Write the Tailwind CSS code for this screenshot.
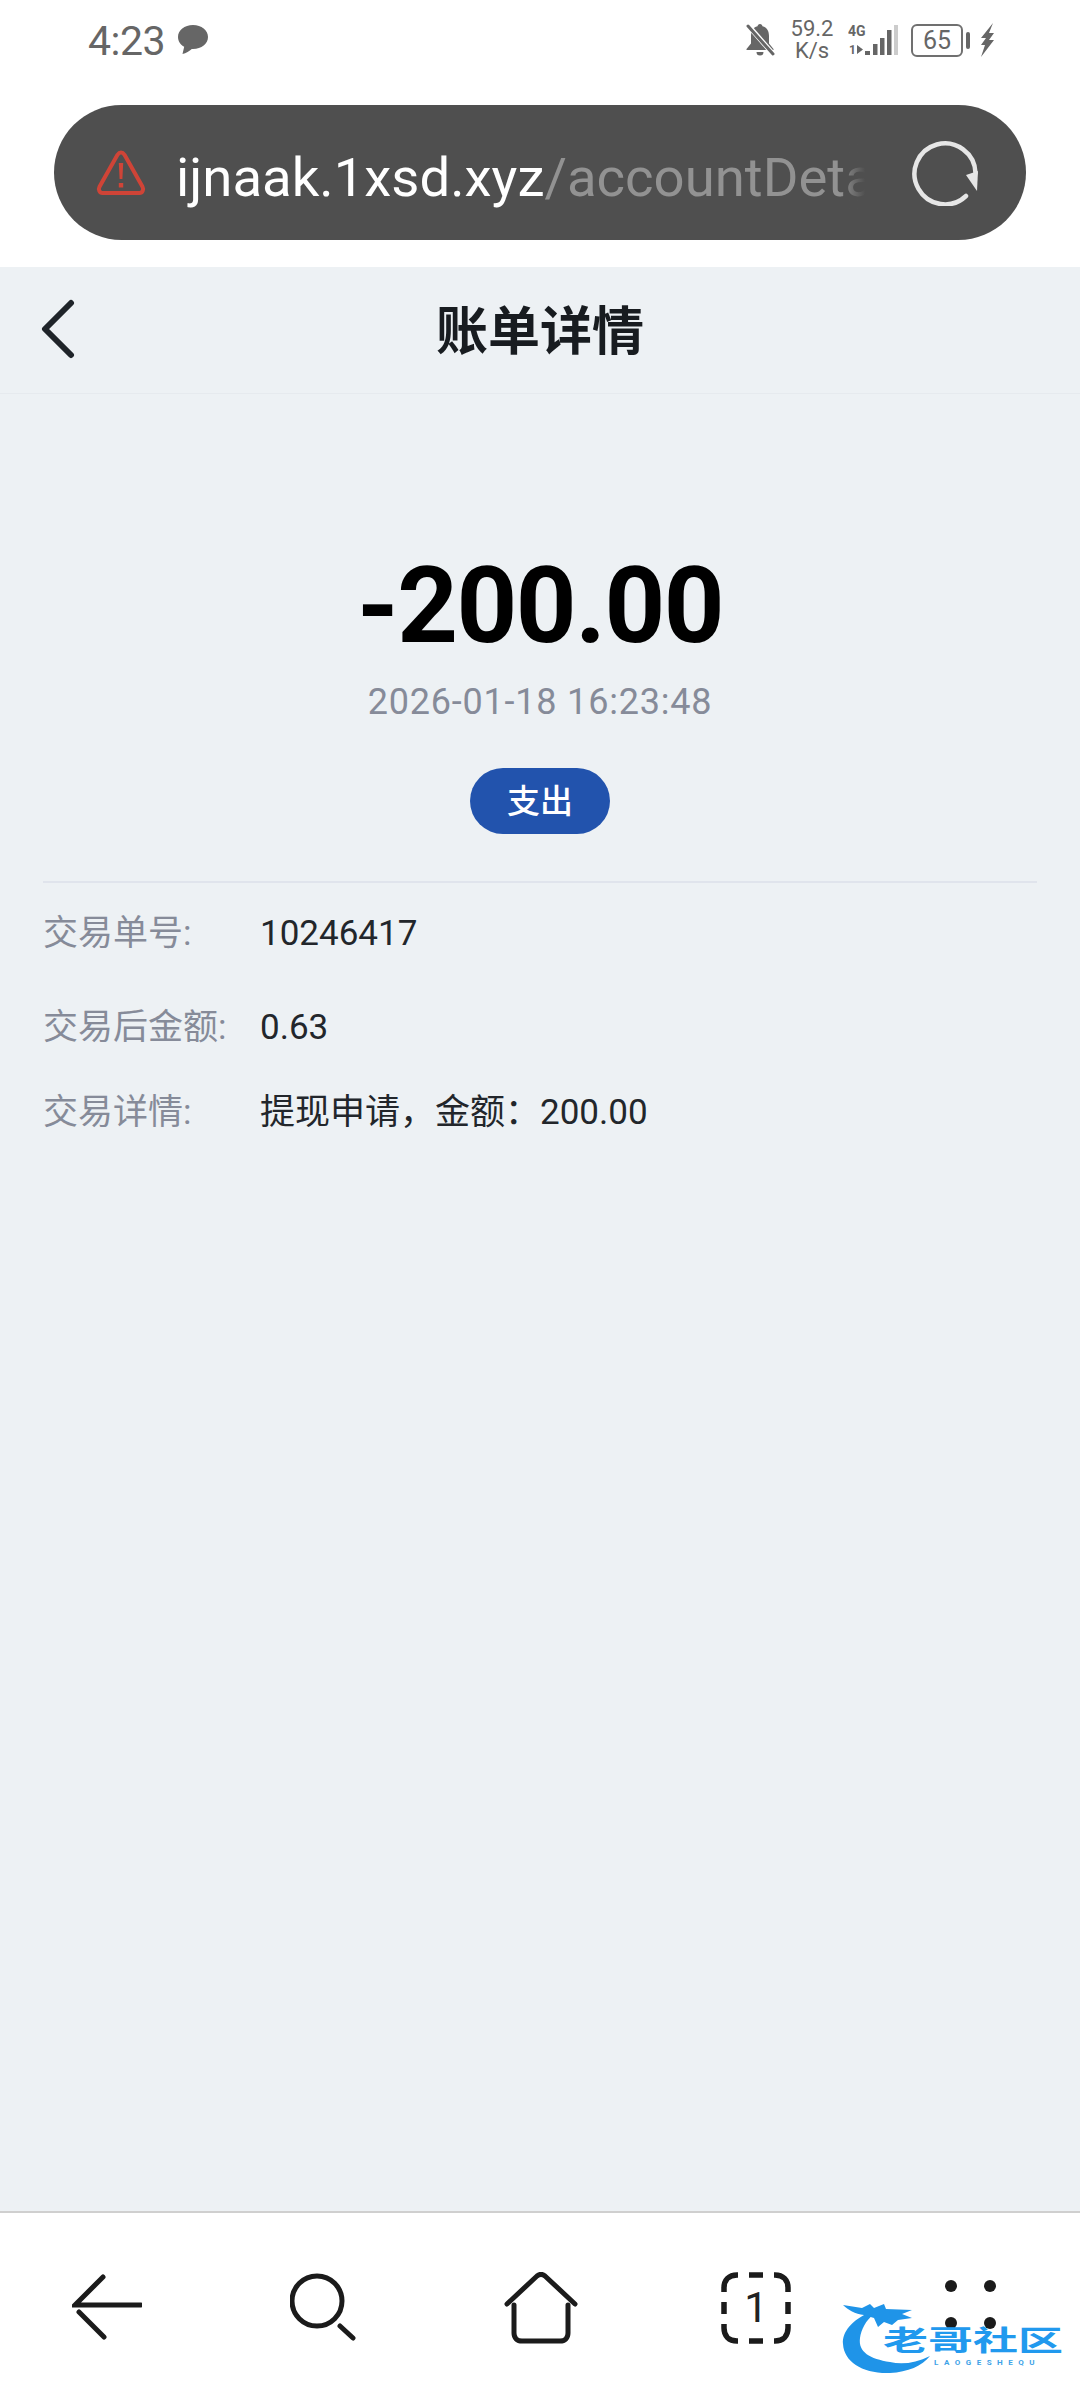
<!DOCTYPE html>
<html lang="zh-CN">
<head>
<meta charset="UTF-8">
<meta name="viewport" content="width=device-width, initial-scale=1.0">
<title>账单详情</title>
<script src="https://cdn.jsdelivr.net/npm/@tailwindcss/browser@4"></script>
</head>
<body class="font-['Roboto','Noto_Sans_CJK_SC',sans-serif] bg-white">
<div class="relative w-[1080px] h-[2400px] flex flex-col overflow-hidden">

  <!-- browser chrome -->
  <header class="h-[267px] shrink-0 bg-white flex flex-col">
    <div class="h-[105px] flex items-start justify-between pl-[88px] pr-[85px] pt-[18px] text-[#666]">
      <div class="flex items-center gap-[12px] h-[40px] mt-[3px]">
        <span class="text-[41px] leading-none tracking-[-0.5px]">4:23</span>
        <svg class="w-[32px] h-[32px] -mt-[3px]" viewBox="0 0 32 32"><path fill="#666" d="M16 1C7.500 1 1 6.300 1 13c0 4.200 2.500 7.700 6.200 9.800L5.500 30c3.500-.8 7-3 9.300-5.100.4 0 .8.100 1.200.100 8.500 0 15-5.300 15-12S24.500 1 16 1z"/></svg>
      </div>
      <div class="flex items-center h-[44px]">
        <svg class="w-[30px] h-[34px]" viewBox="0 0 30 34"><path fill="#666" d="M15 1c-1.500 0-2.300 1-2.500 2.300C8 4.500 6 8 6 13v7.500L1.500 26v1h27v-1L24 20.500V13c0-5-2-8.500-6.500-9.700C17.300 2 16.500 1 15 1z"/><path fill="#666" d="M11.500 29h7a3.500 3.500 0 0 1-7 0z"/><path stroke="#fff" stroke-width="5" d="M2 1l26 30"/><path stroke="#666" stroke-width="3" stroke-linecap="round" d="M3 3l25 28"/></svg>
        <div class="ml-[15px] w-[44px] flex flex-col items-center text-[22px] leading-[22px]">
          <span>59.2</span><span>K/s</span>
        </div>
        <svg class="ml-[14px] w-[50px] h-[34px]" viewBox="0 0 50 34">
          <text x="0" y="13" font-family="Roboto" font-weight="700" font-size="14" fill="#666">4G</text>
          <text x="1" y="31" font-family="Roboto" font-weight="700" font-size="12" fill="#666">1</text>
          <path fill="#666" d="M9 22l6 4.500-6 4.500zM17 28h5v4h-5zM25 21h4.500v11H25zM32 15h4.500v17H32zM39 7h4.500v25H39z"/>
          <path fill="#ccc" d="M46 2h4v30h-4z"/>
        </svg>
        <div class="ml-[13px] w-[52px] h-[33px] rounded-[6px] border-[2.500px] border-[#707070] flex items-center justify-center text-[25px] leading-none">65</div>
        <div class="ml-[3px] w-[4px] h-[17px] rounded-[2px] bg-[#666]"></div>
        <svg class="ml-[9px] w-[16px] h-[34px]" viewBox="0 0 16 34"><path fill="#666" d="M14 0L2 15h5L2 22h4L2 34l13-17h-5l5-7h-5z"/></svg>
      </div>
    </div>
    <div class="h-[135px] mx-[54px] rounded-full bg-[#4f4f4f] flex items-center pl-[42px] pr-[48px]">
      <svg class="w-[50px] h-[46px] shrink-0" viewBox="0 0 50 46" fill="none"><path stroke="#cf4437" stroke-width="4" stroke-linejoin="round" d="M25 2.500c1.500 0 2.500.8 3.500 2.300l18 32c1.500 2.800 0 6.200-3 6.200H6.500c-3 0-4.500-3.400-3-6.200l18-32c1-1.500 2-2.300 3.500-2.300z"/><path fill="#cf4437" d="M22.800 13h4.400l-.8 16h-2.800zM22.800 33h4.400v4.500h-4.400z"/></svg>
      <div class="relative ml-[30px] w-[689px] h-[80px] pt-[10px] overflow-hidden flex items-center whitespace-nowrap text-[54.500px] leading-none">
        <span class="text-white">ijnaak.1xsd.xyz</span><span class="text-[#929292]">/accountDetail?id=10246417</span>
        <div class="absolute right-0 top-0 bottom-0 w-[24px] bg-gradient-to-r from-transparent to-[#4f4f4f]"></div>
      </div>
      <svg class="ml-auto w-[66px] h-[66px] shrink-0" viewBox="0 0 66 66" fill="none"><path stroke="#e6e6e6" stroke-width="4.500" stroke-linecap="round" d="M54 56A30.500 30.500 0 1 1 63.500 33"/><path fill="#e6e6e6" d="M54 35l12-4-1 20z"/></svg>
    </div>
  </header>

  <!-- page -->
  <main class="flex-1 bg-[#edf1f4] flex flex-col">
    <div class="h-[127px] shrink-0 relative flex items-center justify-center border-b border-[#e6eaee]">
      <svg class="absolute left-[40px] top-[32px] w-[36px] h-[60px]" viewBox="0 0 36 60" fill="none"><path stroke="#1f2429" stroke-width="6" stroke-linecap="round" stroke-linejoin="round" d="M31 4L5 30l26 26"/></svg>
      <h1 class="mt-[6px] text-[52px] leading-none font-bold text-[#181c20]">账单详情</h1>
    </div>

    <section class="flex flex-col items-center pt-[151px]">
      <div class="text-[106px] leading-[122px] font-bold tracking-[-1.500px] text-black">-200.00</div>
      <div class="mt-[13px] text-[36px] leading-[44px] tracking-[0.8px] text-[#868b99]">2026-01-18 16:23:48</div>
      <div class="mt-[44px] w-[140px] h-[66px] rounded-full bg-[#2253ad] flex items-center justify-center text-white text-[33px] leading-none font-medium">支出</div>
    </section>

    <div class="mt-[47px] mx-[43px] border-t-2 border-[#e0e4ec]"></div>

    <dl class="mx-[43px] text-[35px] leading-[44px]">
      <div class="flex mt-[29px]">
        <dt class="w-[217px] text-[#868b99]">交易单号:</dt>
        <dd class="text-[#22262b]">10246417</dd>
      </div>
      <div class="flex mt-[50px]">
        <dt class="w-[217px] text-[#868b99]">交易后金额:</dt>
        <dd class="text-[#22262b]">0.63</dd>
      </div>
      <div class="flex mt-[41px]">
        <dt class="w-[217px] text-[#868b99]">交易详情:</dt>
        <dd class="text-[#22262b]">提现申请&#xFF0C;金额&#xFF1A;200.00</dd>
      </div>
    </dl>
  </main>

  <!-- bottom toolbar -->
  <nav class="h-[189px] shrink-0 bg-white border-t-2 border-[#cfcfcf] relative">
    <div class="flex items-start pt-[61px] pl-[72px]">
      <svg class="w-[70px] h-[66px]" viewBox="0 0 70 66" fill="none" stroke="#1b1b1b" stroke-width="5" stroke-linecap="round"><path d="M31 3L3 31h66M7 38l25 25"/></svg>
      <svg class="ml-[148px] -mt-[1px] w-[66px] h-[68px]" viewBox="0 0 66 68" fill="none" stroke="#1b1b1b" stroke-width="5" stroke-linecap="round"><circle cx="27" cy="28" r="25"/><path d="M50 53l13 12"/></svg>
      <svg class="ml-[148px] -mt-[2px] w-[74px] h-[72px]" viewBox="0 0 74 72" fill="none" stroke="#1b1b1b" stroke-width="5" stroke-linecap="round" stroke-linejoin="round"><path d="M3 32L33 4c2.500-2 5.500-2 8 0l30 28"/><path d="M10 33v28c0 5 3 8 8 8h38c5 0 8-3 8-8V33"/></svg>
      <div class="relative ml-[143px] -mt-[2px] w-[70px] h-[72px] flex items-center justify-center text-[42px] leading-none text-[#222]">
        <svg class="absolute inset-0" viewBox="0 0 70 72" fill="none" stroke="#1b1b1b" stroke-width="5.500"><path d="M3 20v-4C3 8 8 3 16 3h1M28 3h14M53 3h1c8 0 13 5 13 13v4M3 30v12M67 30v12M3 52v4c0 8 5 13 13 13h1M28 69h14M53 69h1c8 0 13-5 13-13v-4"/></svg>
        1
      </div>
      <div class="ml-[154px] mt-[6px] w-[51px] grid grid-cols-2 gap-x-[27px] gap-y-[25px]">
        <span class="w-[12px] h-[12px] rounded-full bg-[#1b1b1b]"></span><span class="w-[12px] h-[12px] rounded-full bg-[#1b1b1b]"></span>
        <span class="w-[12px] h-[12px] rounded-full bg-[#1b1b1b]"></span><span class="w-[12px] h-[12px] rounded-full bg-[#1b1b1b]"></span>
      </div>
    </div>

    <!-- watermark over the toolbar -->
    <div class="absolute left-[840px] top-[87px] w-[226px] h-[76px]">
      <svg class="absolute left-0 top-0 w-[95px] h-[76px]" viewBox="0 0 95 76" fill="none">
        <path fill="#1f94e8" d="M30 12C12 20 2 32 3 44c1 18 20 30 47 29 18-1 32-7 40-17-14 7-28 9-40 6C30 59 18 52 20 38c1-8 6-18 14-24z"/>
        <path fill="#1f94e8" d="M3 5l19 3 8-4 4 4 10-4 2 5 26 1-10 4 10 4-14 2-6 5-8-3-6 5-4-9-10-3C15 14 8 10 3 5z"/>
      </svg>
      <div class="absolute left-[43px] top-[19px] text-[#2199ee] font-bold text-[45px] leading-[45px] scale-y-[0.62] whitespace-nowrap">老哥社区</div>
      <div class="absolute left-[94px] top-[59px] text-[#3fa3e8] font-bold text-[8px] leading-[8px] tracking-[5.500px] whitespace-nowrap">LAOGESHEQU</div>
    </div>
  </nav>
</div>
</body>
</html>
